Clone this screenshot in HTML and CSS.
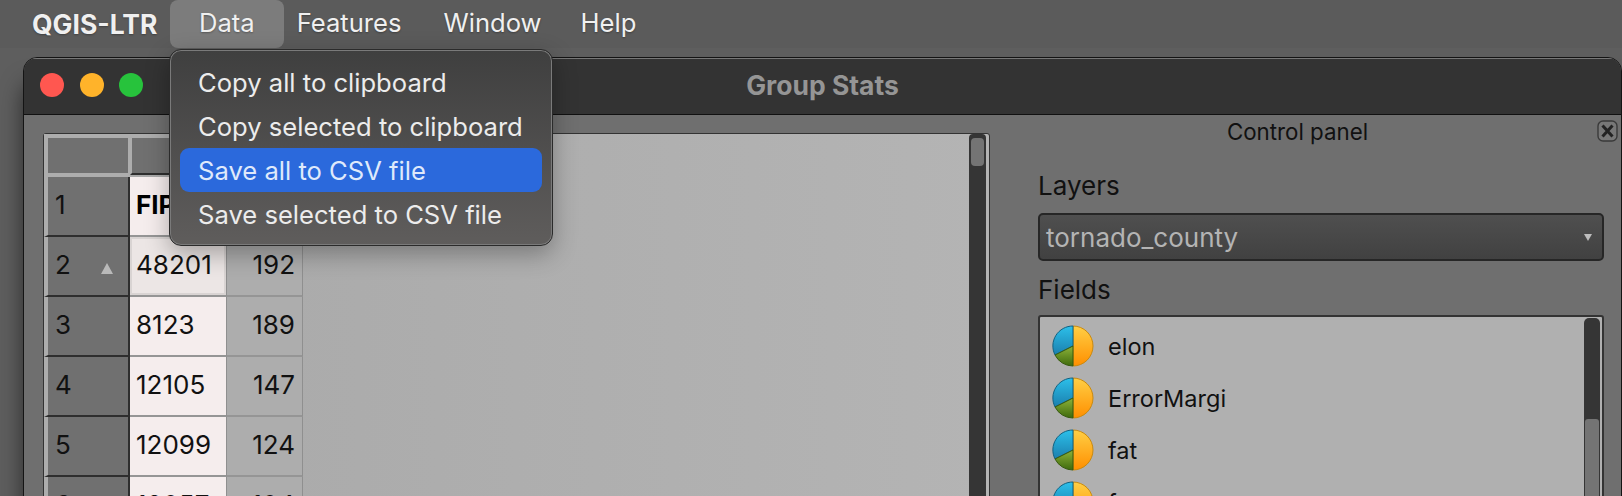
FILE: index.html
```html
<!DOCTYPE html>
<html lang="en">
<head>
  <meta charset="UTF-8" />
  <meta name="viewport" content="width=device-width, initial-scale=1.0"/>
  <title>Group Stats</title>
  <link rel="stylesheet" href="styles.css">
</head>
<body>

<svg class="defs" width="0" height="0" aria-hidden="true">
  <defs>
    <linearGradient id="pieOrange" x1="0" y1="0" x2="0" y2="1">
      <stop offset="0" stop-color="#ffcf45"/>
      <stop offset="1" stop-color="#ff8f00"/>
    </linearGradient>
    <linearGradient id="pieBlue" x1="0" y1="0" x2="0" y2="1">
      <stop offset="0" stop-color="#2cc0ea"/>
      <stop offset="1" stop-color="#1b7fae"/>
    </linearGradient>
    <linearGradient id="pieGreen" x1="0" y1="0" x2="0" y2="1">
      <stop offset="0" stop-color="#8db33a"/>
      <stop offset="1" stop-color="#3f6a0c"/>
    </linearGradient>
    <symbol id="pie" viewBox="0 0 42 42">
      <path d="M21 1A20 20 0 0 1 21 41Z" fill="url(#pieOrange)" stroke="#c98a10" stroke-width="1"/>
      <path d="M21 1A20 20 0 0 0 3 30L21 21Z" fill="url(#pieBlue)" stroke="#13607f" stroke-width="1"/>
      <path d="M3 30A20 20 0 0 0 21 41V21Z" fill="url(#pieGreen)" stroke="#37590f" stroke-width="1"/>
    </symbol>
  </defs>
</svg>

<!-- MENU BAR -->
<header class="menubar">
  <span class="app-name">QGIS-LTR</span>
  <span class="menu-title open">Data</span>
  <span class="menu-title">Features</span>
  <span class="menu-title">Window</span>
  <span class="menu-title">Help</span>
</header>

<!-- DATA MENU -->
<ul class="dropdown">
  <li>Copy all to clipboard</li>
  <li>Copy selected to clipboard</li>
  <li class="active">Save all to CSV file</li>
  <li>Save selected to CSV file</li>
</ul>

<!-- WINDOW -->
<div class="window">
  <div class="titlebar">
    <div class="lights">
      <span class="light red"></span>
      <span class="light orange"></span>
      <span class="light green"></span>
    </div>
    <span class="window-title">Group Stats</span>
  </div>

  <div class="window-body">
    <div class="results">
      <div class="grid">
        <div class="corner"></div>
        <div class="col-head"></div>
        <div class="col-head"></div>

        <div class="row-head">1</div>
        <div class="cell bold">FIPS</div>
        <div class="cell num"></div>

        <div class="row-head">2<span class="sort"></span></div>
        <div class="cell current">48201</div>
        <div class="cell num">192</div>

        <div class="row-head">3</div>
        <div class="cell">8123</div>
        <div class="cell num">189</div>

        <div class="row-head">4</div>
        <div class="cell">12105</div>
        <div class="cell num">147</div>

        <div class="row-head">5</div>
        <div class="cell">12099</div>
        <div class="cell num">124</div>

        <div class="row-head">6</div>
        <div class="cell">12057</div>
        <div class="cell num">104</div>
      </div>
      <div class="vscroll"><div class="vthumb"></div></div>
    </div>

    <aside class="panel">
      <div class="panel-head">
        <span>Control panel</span>
        <span class="panel-close">
          <svg width="21" height="22" viewBox="0 0 21 22">
            <rect x="1" y="1" width="19" height="20" rx="5" fill="#777" stroke="#3a3a3a" stroke-width="1.4"/>
            <path d="M5.500 5.500 15.500 16.500M15.500 5.500 5.500 16.500" stroke="#222" stroke-width="3" fill="none"/>
          </svg>
        </span>
      </div>
      <div class="panel-body">
        <label class="field-label">Layers</label>
        <div class="combo">
          <span>tornado_county</span>
          <span class="combo-arrow"></span>
        </div>
        <label class="field-label fields-label">Fields</label>
        <div class="field-list">
          <ul>
            <li><svg class="pie"><use href="#pie"/></svg>elon</li>
            <li><svg class="pie"><use href="#pie"/></svg>ErrorMargi</li>
            <li><svg class="pie"><use href="#pie"/></svg>fat</li>
            <li><svg class="pie"><use href="#pie"/></svg>fc</li>
          </ul>
          <div class="list-scroll"><div class="list-thumb"></div></div>
        </div>
      </div>
    </aside>
  </div>
</div>

</body>
</html>
```

FILE: styles.css
```css
html, body {
  margin: 0;
  padding: 0;
  height: 496px;
  overflow: hidden;
}
body {
  font-family: Inter, "Liberation Sans", sans-serif;
  background: #5e5e5e;
  position: relative;
  color: #111;
}
.defs {
  position: absolute;
}
ul {
  list-style: none;
  margin: 0;
  padding: 0;
}

/* menu bar */
.menubar {
  height: 48px;
  background: #5b5b5b;
  display: flex;
  align-items: center;
  padding-left: 32px;
  font-size: 25.600px;
  color: #f0f0f0;
  text-shadow: 0 1px 2px rgba(0,0,0,0.3);
}
.app-name {
  font-size: 26.500px;
  font-weight: 700;
  width: 138px;
}
.menu-title {
  padding: 0 21px;
  height: 48px;
  line-height: 46px;
}
.menu-title.open {
  background: #7c7c7c;
  border-radius: 8px;
  padding: 0 29px;
  margin-right: -8px;
}
.menu-title:last-child {
  margin-left: -3px;
}

/* dropdown */
.dropdown {
  position: absolute;
  left: 169px;
  top: 49px;
  width: 384px;
  height: 197px;
  box-sizing: border-box;
  padding: 10px 10px;
  background: linear-gradient(#3f3f3f, #5f5d5c);
  border: 1px solid #2b2b2b;
  border-radius: 12px;
  box-shadow: inset 0 0 0 1px #7a7a7a, 0 8px 24px rgba(0,0,0,0.3);
  font-size: 25.600px;
  color: #ececec;
  z-index: 5;
}
.dropdown li {
  height: 44px;
  line-height: 46px;
  padding-left: 18px;
  border-radius: 9px;
}
.dropdown li.active {
  background: #2b69dc;
  color: #dfe9fb;
}

/* window */
.window {
  margin: 9px 0 0 23px;
  height: 439px;
  background: #6f6f6f;
  border: 1px solid #141414;
  border-radius: 14px 14px 0 0;
  box-shadow: 0 26px 22px rgba(0,0,0,0.55);
  overflow: hidden;
}
.titlebar {
  height: 56px;
  background: #333;
  box-shadow: inset 0 1px 0 #777;
  border-bottom: 1px solid #111;
  display: flex;
  align-items: center;
  position: relative;
}
.lights {
  display: flex;
  gap: 15.500px;
  padding: 0 0 2px 16px;
}
.light {
  width: 24px;
  height: 24px;
  border-radius: 50%;
}
.red { background: #ff5750; }
.orange { background: #ffb32a; }
.green { background: #27c33c; }
.window-title {
  position: absolute;
  left: 0;
  right: 0;
  text-align: center;
  font-size: 26.500px;
  font-weight: 700;
  color: #959595;
  padding-bottom: 2px;
}
.window-body {
  display: flex;
  padding: 18px 0 0 19px;
}

/* results table */
.results {
  width: 947px;
  height: 400px;
  flex: none;
  display: flex;
  justify-content: space-between;
  background: linear-gradient(90deg, #a8a8a8, #b4b4b4);
  border: 1px solid #333;
  border-radius: 3px 3px 0 0;
  box-sizing: border-box;
}
.grid {
  display: grid;
  grid-template-columns: 86px 97px 76px;
  grid-template-rows: 43px repeat(6, 60px);
  align-self: flex-start;
  font-size: 26px;
}
.corner, .col-head {
  background: #707070;
  border: 4px solid #adadad;
  border-right-width: 0;
}
.corner {
  border-right-width: 2px;
}
.col-head {
  border-left-width: 2px;
  border-left-color: #adadad;
  border-bottom: 2px solid #2e2e2e;
  margin-bottom: 2px;
}
.col-head + .col-head {
  border-left-width: 0;
}
.row-head {
  background: #707070;
  border-left: 4px solid #adadad;
  border-right: 2px solid #2e2e2e;
  border-bottom: 2px solid #2e2e2e;
  padding: 0 0 3px 7px;
  display: flex;
  align-items: center;
  position: relative;
}
.sort {
  position: absolute;
  right: 15px;
  top: 26px;
  border-left: 6px solid transparent;
  border-right: 6px solid transparent;
  border-bottom: 11px solid #b9b9b9;
}
.cell {
  background: #f5eded;
  border-right: 1px solid #8f8f8f;
  border-bottom: 2px solid #959595;
  padding: 0 0 3px 6px;
  display: flex;
  align-items: center;
}
.cell.bold {
  font-weight: 700;
  color: #000;
}
.cell.current {
  background: #ece6e5;
  box-shadow: inset 0 0 0 2px #d9d4d3;
}
.cell.num {
  background: #adadad;
  justify-content: flex-end;
  padding: 0 7px 3px 0;
}
.vscroll {
  width: 17px;
  margin-right: 3px;
  background: #353535;
  border-radius: 4px 4px 0 0;
  padding: 4px 2px 0;
  box-sizing: border-box;
}
.vthumb {
  height: 28px;
  background: #747474;
  border-radius: 4px;
}

/* control panel */
.panel {
  flex: 1;
  min-width: 0;
  margin-top: -18px;
  font-size: 23.500px;
}
.panel-head {
  height: 32px;
  display: flex;
  align-items: center;
  justify-content: center;
  position: relative;
  font-size: 22.300px;
  padding-right: 16px;
}
.panel-close {
  position: absolute;
  right: 3px;
  top: 5px;
  height: 22px;
}
.panel-body {
  padding: 26px 17px 0 48px;
}
.field-label {
  display: block;
  height: 25px;
  line-height: 25px;
  font-size: 26px;
}
.combo {
  height: 48px;
  margin-top: 15px;
  box-sizing: border-box;
  border: 2px solid #262626;
  border-radius: 5px;
  background: linear-gradient(#4f4f4f, #414141);
  color: #b4b4b4;
  font-size: 26px;
  display: flex;
  justify-content: space-between;
  align-items: center;
  padding: 0 10px 0 6px;
}
.combo-arrow {
  border-left: 4px solid transparent;
  border-right: 4px solid transparent;
  border-top: 7px solid #bdbdbd;
}
.fields-label {
  margin-top: 16px;
}
.field-list {
  margin-top: 13px;
  height: 200px;
  background: #b0b0b0;
  border: 2px solid #333;
  border-radius: 3px 3px 0 0;
  display: flex;
  justify-content: space-between;
  box-sizing: border-box;
}
.field-list li {
  height: 52px;
  display: flex;
  align-items: center;
  gap: 14px;
  padding-left: 12px;
}
.field-list ul {
  padding-top: 3px;
}
.pie {
  width: 42px;
  height: 42px;
}
.list-scroll {
  width: 16px;
  margin: 1px 2px 0 0;
  background: #353535;
  border-radius: 5px 5px 0 0;
  padding-top: 101px;
  box-sizing: border-box;
}
.list-thumb {
  height: 100%;
  margin: 0 1px;
  background: #747474;
  border-radius: 3px 3px 0 0;
}
```
